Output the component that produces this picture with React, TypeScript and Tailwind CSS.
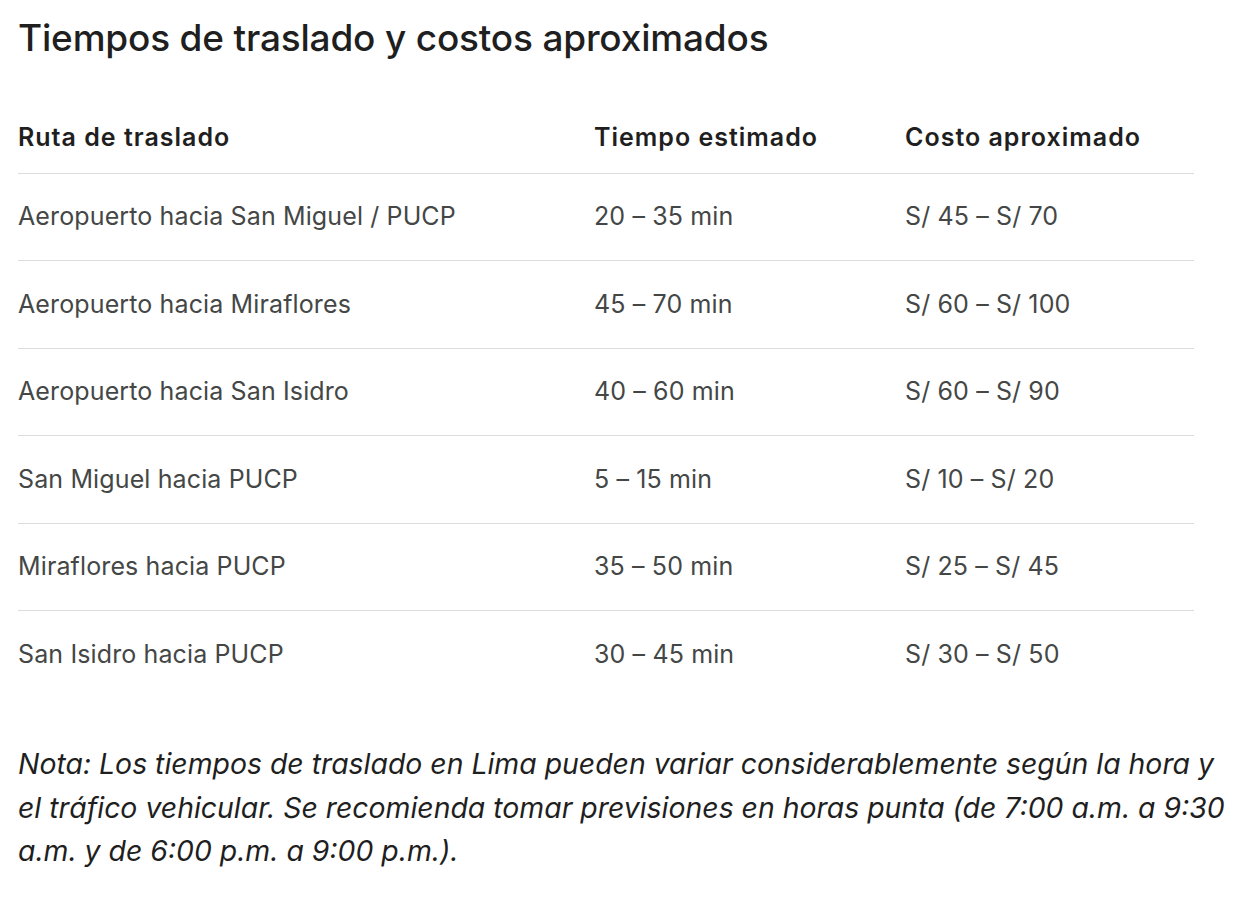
import React from 'react';

const rows = [
  ['Aeropuerto hacia San Miguel / PUCP', '20 – 35 min', 'S/ 45 – S/ 70'],
  ['Aeropuerto hacia Miraflores', '45 – 70 min', 'S/ 60 – S/ 100'],
  ['Aeropuerto hacia San Isidro', '40 – 60 min', 'S/ 60 – S/ 90'],
  ['San Miguel hacia PUCP', '5 – 15 min', 'S/ 10 – S/ 20'],
  ['Miraflores hacia PUCP', '35 – 50 min', 'S/ 25 – S/ 45'],
  ['San Isidro hacia PUCP', '30 – 45 min', 'S/ 30 – S/ 50'],
];

const App: React.FC = () => {
  return (
    <div className="min-h-screen bg-white px-[18px] pt-[14px] font-['Inter',sans-serif]">
      <h2 className="text-[37px] leading-[48px] font-medium tracking-[-0.005em] text-[#1f1f1f]">
        Tiempos de traslado y costos aproximados
      </h2>

      {/* Table */}
      <div className="mt-[40px] w-[1176px]">
        <div className="grid grid-cols-[576px_311px_289px] h-[72px] items-center border-b border-[#dadce0] text-[25px] font-semibold tracking-[0.04em] text-[#1f1f1f]">
          <div>Ruta de traslado</div>
          <div>Tiempo estimado</div>
          <div>Costo aproximado</div>
        </div>
        {rows.map((r, i) => (
          <div
            key={i}
            className={`grid grid-cols-[576px_311px_289px] h-[87.4px] items-center text-[25px] tracking-[0.005em] text-[#444746] ${
              i < rows.length - 1 ? 'border-b border-[#dadce0]' : ''
            }`}
          >
            <div>{r[0]}</div>
            <div>{r[1]}</div>
            <div>{r[2]}</div>
          </div>
        ))}
      </div>

      <p className="mt-[44px] w-[1218px] text-[28.4px] leading-[43.5px] italic text-[#1f1f1f]">
        Nota: Los tiempos de traslado en Lima pueden variar considerablemente según la hora y el tráfico vehicular. Se
        recomienda tomar previsiones en horas punta (de 7:00 a.m. a 9:30 a.m. y de 6:00 p.m. a 9:00 p.m.).
      </p>
    </div>
  );
};

export default App;
